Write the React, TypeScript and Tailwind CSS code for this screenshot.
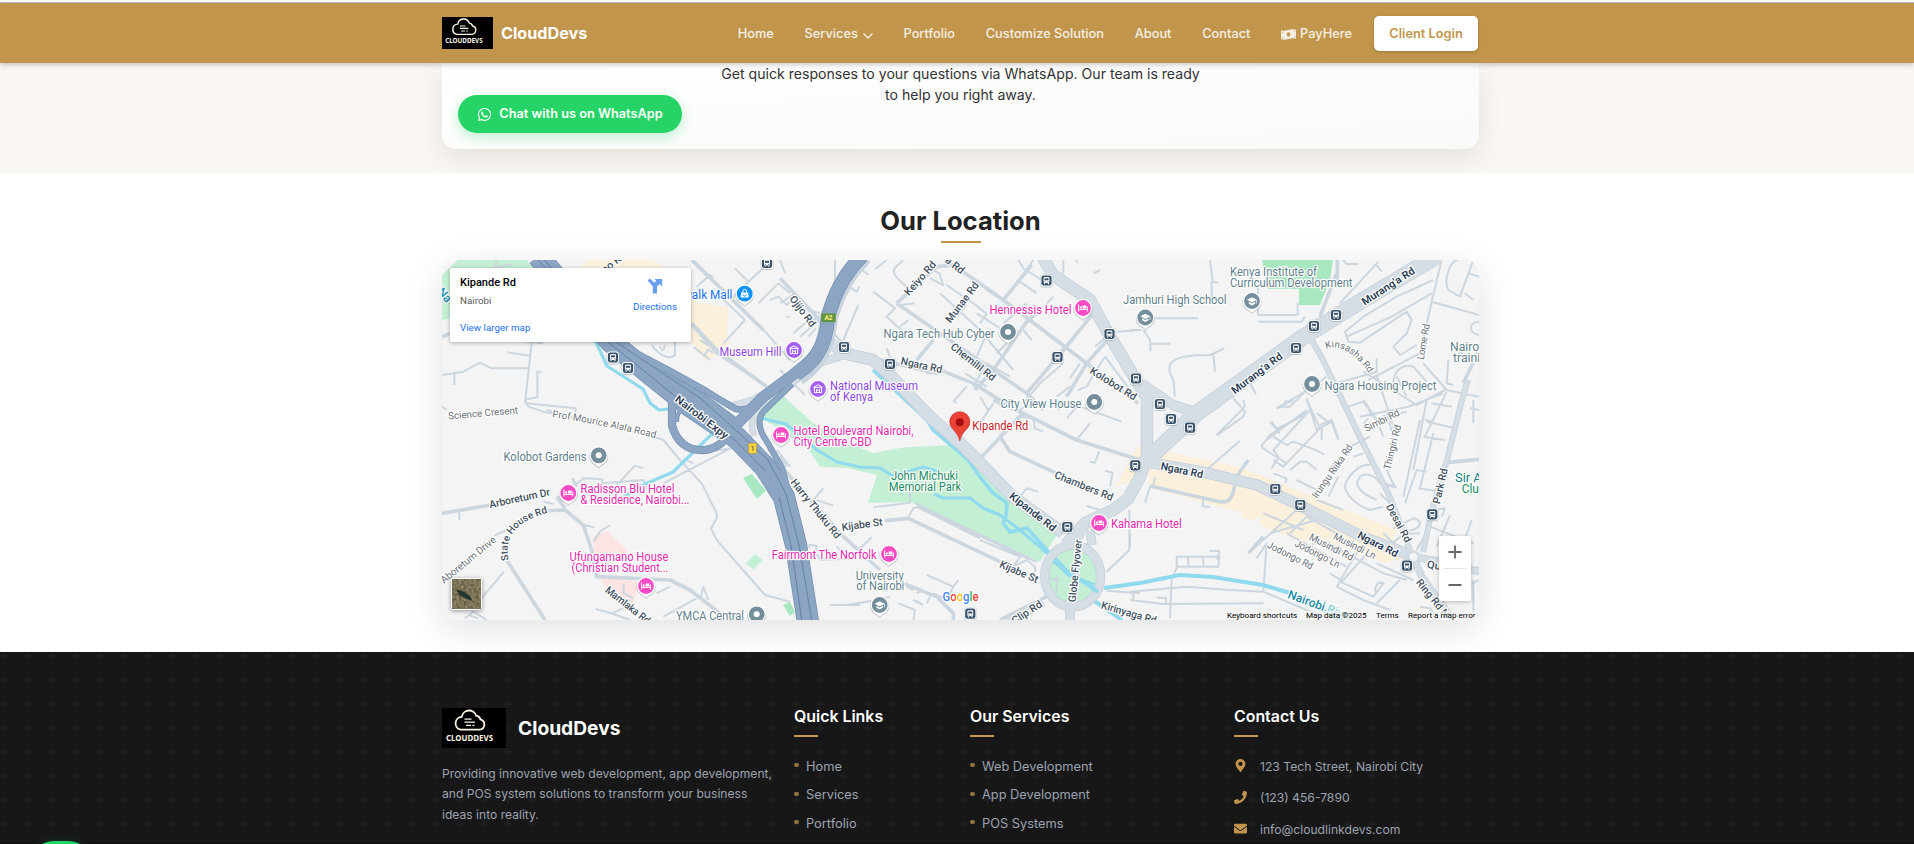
import React from "react";
import { FaWhatsapp, FaMoneyBillWave, FaMapMarkerAlt, FaPhone, FaEnvelope } from "react-icons/fa";

/* ---------- Logo ---------- */
function Logo({ className }: { className: string }) {
  return (
    <svg viewBox="0 0 64 40" preserveAspectRatio="none" className={className}>
      <rect width="64" height="40" fill="#000" />
      <path
        d="M18.5 21.7H37.5a5.3 5.3 0 0 0 .9-10.4 5 5 0 0 0-4.2-3.6 7.4 7.4 0 0 0-14.4 1.2A6.5 6.5 0 0 0 18.5 21.7z"
        fill="none"
        stroke="#fdf6e6"
        strokeWidth="1.8"
        strokeLinejoin="round"
      />
      <path d="M22.5 11.2h7M22.5 14.2h10.5M24 17.4h5M30.5 17.4h2" stroke="#fdf6e6" strokeWidth="1.3" />
      <text x="4" y="32.8" textLength="47" lengthAdjust="spacingAndGlyphs" fontFamily="'Noto Sans','Open Sans',sans-serif" fontWeight="700" fontSize="8" fill="#fdf6e6">
        CLOUDDEVS
      </text>
    </svg>
  );
}

/* ---------- Map data ---------- */
type Region = "nw" | "n" | "ne" | "sw" | "s" | "se";
const origin: Record<Region, string> = {
  nw: "translate(430 190) scale(.33333)",
  n: "translate(780 190) scale(.33333)",
  ne: "translate(1130 250) scale(.33333)",
  sw: "translate(430 400) scale(.33333)",
  s: "translate(780 400) scale(.33333)",
  se: "translate(1130 400) scale(.33333)",
};

const thinRoads: Record<Region, string> = {
  nw: "M36 555L100 545L150 518L185 535L300 535M73 545V585M232 487L300 497M305 457L285 640M285 455L340 460M325 545H335M333 545H322V622L290 628M285 640L440 655M200 210L195 235M180 238L245 222M790 210L1010 430L1080 510M915 235L955 275L1010 225M955 275L900 330M985 340L1045 280L1080 310M1020 330L1045 320L1070 345L1080 335M945 390L880 460M945 390L860 310M800 290L840 255L850 262M780 400L860 490L1010 590M665 465C690 500 720 510 735 495V455M690 470C700 490 700 480 705 465M810 450L850 475M790 470L840 510M820 500L835 478L850 490M1070 380H1080",
  n: "M0 265L120 400M0 210L15 250M165 210V300M190 280L230 305L238 290M210 240L240 210M240 235L265 255M285 238L320 210M0 340L45 310M40 430L75 400L115 385M60 440L95 410M85 440L108 415M90 360L120 370M160 430L200 470M235 345L190 450M280 305L345 355L320 380L380 435M360 345L405 340M380 290C320 240 340 240 370 210M360 410L385 390M450 265L490 285L478 250L440 230M500 285L580 340L620 372L600 400M480 310L600 420L700 540M560 485L600 520M530 380L560 345M590 370L700 440M620 430L590 500M690 560L620 520L580 590M650 490L690 450M740 400L760 370M730 420L755 450M715 210L730 235L785 270M690 310L760 210M720 275L770 310M850 210V250M890 220V210M940 250L960 240M670 400L740 340M800 340L820 320M1010 425L1080 420M975 500L1065 620M975 500L940 555L920 590L895 600M945 470L980 440M870 565L900 520M850 630L835 660M830 620L870 590M0 540L40 580L75 615M320 475L330 500M440 550H480L495 540M520 635L560 590M600 620L625 660M730 640L780 580L850 520M555 550L620 590M620 300L700 350",
  ne: "M240 30L248 95L265 98M245 95V165M75 205H205M0 240L35 240M40 240L60 270L62 303M60 281H122M283 295L240 315C140 315 110 330 120 370C140 400 130 430 135 440M250 310L255 365M360 400L378 433M310 445L345 485L340 500L260 556M384 105V195H500M384 215H515L525 200M503 160V195M630 160L745 35M640 30L650 42H685M740 45L755 65M935 30L905 155L870 310L715 390M905 155L1047 195M905 130L785 200L650 260M910 90L800 140L700 200L645 245L655 275L690 278L830 185L845 210L830 250L790 290L810 315L860 285M955 120C940 90 960 30 985 30M955 120L990 140L1030 30M1015 70L1047 80M1005 130L1030 150M1047 215C1020 215 1010 245 1047 255M880 340L950 420L1047 440M740 325V365L620 400M700 365L860 465L945 420M790 400C790 360 820 340 850 350L890 395M940 430L835 470L690 500M655 470L700 455L740 510M710 460L725 500M950 425L885 560M890 515L975 535M905 460L965 470M800 380L830 440M740 375L800 560M950 400L970 405M985 310H1000M955 330L950 400M440 475L550 410M460 470H480L520 430M570 395L590 380M530 445L560 540L605 515L625 570M420 515L450 550M410 570L530 480M575 535V570M770 490L790 560M560 490L600 520",
  sw: "M36 20L50 30M285 0L295 20L340 35L440 55L435 28M350 30L372 35M670 110L700 120L750 180L815 250L860 340V355L843 385L860 420L1005 585L1080 605M930 130L700 250M800 160L905 145M425 235L435 255L460 235L517 238V250L640 240L650 260M560 255L615 197L640 205M610 240L650 265M88 335V360M340 305L370 312M430 235L440 260M193 407L230 390M222 515L125 630M105 655L130 635L170 660M115 645L145 655M460 375L493 382M540 375L510 395L490 425M497 627L545 640L600 660M545 640L580 625M580 550L582 580L610 595M700 650L800 595M810 600L820 560L835 600M680 580L720 560M770 180L790 190M1040 150L1080 200",
  s: "M0 170L20 200M280 322L390 308V270M385 350L400 325L415 320L730 470L770 485M405 310L760 480M410 320L600 415M100 300L130 265M110 300L160 317M88 445V435L110 437L105 460L125 480L225 475M235 450L275 412M170 440L200 470M150 615H240M200 615L290 600L330 590M440 525L520 560L535 540M520 560L500 600L460 580M355 610L405 630L400 660M380 560L400 570M410 580L430 570M400 600L430 615M440 610L450 590M720 290L740 265L775 275M600 420L720 470L700 500M860 55L895 15M1025 65L900 20L850 5M890 120L930 70M720 50L760 55L765 85L790 95M730 40L720 30L760 0M930 185L945 188L957 155M975 212L998 218L990 260M920 318L960 330M980 515L1048 450V330M980 572L1080 580M700 500L740 480L765 500V515M800 530L840 545M830 530V580M600 70L640 10M520 0L530 10M740 90L710 50",
  se: "M340 0L345 20L260 105M0 575L170 560L300 570L400 575L600 660M0 600L100 612L400 610M80 592L108 595V612M10 575V600M120 655L125 535L140 505V470H268L265 500H140M175 470V500M220 475V500M238 453H268L262 480M400 575L410 430M355 460L500 330M410 430L380 475M235 205L330 122M0 440V400M60 260L45 308M75 230L70 255M220 300L218 318L240 322M500 240L560 270M430 220L470 235L465 250M425 205L445 170L430 150L540 30M430 180L460 200L570 85L530 0M393 140L420 105L530 35M393 140L430 165L470 190M430 110L470 135L490 125L545 145L583 163M425 65L440 85L465 75L520 45M480 210L510 185L530 185L560 210M570 75L605 60L625 115M440 25L490 0M455 25L470 0M645 265C645 230 690 190 720 195M645 265C660 300 690 320 720 330L760 320M680 250L690 230C710 215 740 230 750 250L795 262L770 210M680 250C690 280 720 290 740 300M560 300L640 330M595 290L625 230M640 150L720 110M670 170L700 160M700 0L740 60L830 35M740 60L760 110M715 55L700 70M780 310L750 280M760 250L800 262M825 310L860 210M820 290L870 60M865 265L935 275M870 265L910 100M885 60L910 65M880 110L945 120M860 210L890 215M890 0L850 210M910 330L945 325L935 350M900 380L1030 430M960 345L920 440M1025 360L1000 430M940 430L1000 460M790 385L850 355C880 360 880 390 820 395M760 400L790 430C810 400 850 400 870 400M400 340L520 390M480 400L530 350L620 400M420 400L560 360M470 400L650 500M560 420L540 440M630 450L760 520L830 540M690 440L620 560L700 600L780 630M600 520L640 545M630 545L730 590L760 550C740 540 730 570 740 580M810 540L740 610M720 450L640 540M740 490L850 540M960 440L990 470M860 450L900 380M1030 70V0M1020 25L1047 30M870 620L900 625L910 640L980 640M1030 660V540M1010 560L1047 540",
};

const midRoads: Record<Region, string> = {
  nw: "M36 440L62 430M785 400L860 480L1010 590M785 210L1000 420",
  n: "M350 340L560 485L740 610L790 660M350 340L470 230L520 225L670 330L920 520L1075 640M670 330L755 225M740 395L640 540L585 600M940 370L850 480L740 610M480 540L580 580L690 650M1000 430L920 520L860 620M460 450L410 510M780 360L740 395M260 500L470 550M0 265L120 390",
  ne: "M545 265L580 335L690 570M620 70L570 200M622 30V90M1047 300L1000 400",
  sw: "M36 340L200 312M355 332L405 330L460 375L485 450L500 530L720 540L780 570L870 640M230 480L345 660M380 290L405 325",
  s: "M0 195L180 400L300 510M315 362L385 355L660 485M370 550L470 590L520 640V660M660 110L690 155L830 220M660 110L730 40L640 0M605 170L730 40L890 120L1080 180M830 380L720 290M660 660L800 590",
  se: "M60 258L270 305C300 310 310 290 315 250M315 235L355 180M355 460L400 410M950 188L1047 178M1000 505H1047",
};

const trunk: { d: string; w: number }[] = [
  { d: "M822 338L847 354L873 360L892 377L930 417L960 443L980 463L1013 497L1063 533", w: 11 },
  { d: "M785 388L800 376L822 362L847 354", w: 7 },
  { d: "M728 406C752 404 770 392 795 374", w: 6 },
  { d: "M754 436C747 415 757 408 795 378", w: 5 },
  { d: "M1042 256L1053 275L1090 300L1108 333L1133 375L1147 398V437V455L1140 477L1128 499L1113 510L1085 523L1066 545", w: 11 },
  { d: "M1142 384L1173 405L1197 413", w: 9 },
  { d: "M1437 256L1363 300L1303 337L1197 413L1147 460", w: 15 },
  { d: "M1147 462L1203 472L1257 485L1303 507L1363 537L1410 555", w: 10 },
  { d: "M1423 552L1432 510L1447 460L1462 400L1468 380", w: 4.5 },
  { d: "M1310 337L1323 360L1360 437L1390 497L1410 550", w: 4.5 },
  { d: "M1413 557L1422 577L1450 616M1413 557L1445 562L1479 572", w: 6 },
  { d: "M1043 602L1008 622M1070 600V622", w: 8 },
  { d: "M1090 530L1092 545", w: 8 },
];

const express: { d: string; w: number }[] = [
  { d: "M538 256L611 342L650 374L690 406L737 438L765 467L784 497L796 545L808 622", w: 21 },
  { d: "M660 376L700 398L735 424", w: 11 },
  { d: "M618 338L630 350L670 371L706 391L722 401L736 409C746 411 752 407 758 402", w: 5.5 },
  { d: "M862 256C842 276 834 296 828 317C826 350 808 364 790 377L763 397L737 424", w: 10 },
  { d: "M862 256C842 276 834 296 828 317C826 350 812 364 796 374", w: 13 },
  { d: "M672 393V425C676 442 688 450 700 450C712 451 722 445 732 432", w: 7 },
  { d: "M677 422C676 414 680 410 688 404", w: 3 },
  { d: "M792 384L764 411C756 420 760 432 766 440L782 468L790 497", w: 5 },
];

type Label = [number, number, number, string, string];
const pink = "#e528ad";
const slate = "#5f7f8c";
const purple = "#8b46dd";
const green = "#1b8a5f";
const places: Label[] = [
  [989.5, 313.7, 82, "Hennessis Hotel", pink],
  [719.5, 355.7, 62, "Museum Hill", purple],
  [830, 389.5, 88, "National Museum", purple],
  [830, 400.5, 43, "of Kenya", purple],
  [883.5, 337.7, 111, "Ngara Tech Hub Cyber", slate],
  [1000.5, 407.5, 81, "City View House", slate],
  [1123, 304, 103.5, "Jamhuri High School", slate],
  [1230, 275.5, 87, "Kenya Institute of", slate],
  [1230, 286.5, 122.5, "Curriculum Development", slate],
  [1324.5, 389.5, 112, "Ngara Housing Project", slate],
  [1450, 351, 39, "Nairobi", slate],
  [1453, 362, 41, "training", slate],
  [503.5, 460.7, 83, "Kolobot Gardens", slate],
  [580.5, 492.7, 94, "Radisson Blu Hotel", pink],
  [580.5, 504, 109, "& Residence, Nairobi...", pink],
  [569.5, 561.3, 99, "Ufungamano House", pink],
  [571.5, 572.3, 97, "(Christian Student...", pink],
  [676, 619.5, 68, "YMCA Central", slate],
  [793.5, 434.7, 120, "Hotel Boulevard Nairobi,", pink],
  [793.5, 445.7, 78, "City Centre CBD", pink],
  [972.3, 430, 56, "Kipande Rd", "#c5221f"],
  [891, 480.3, 67, "John Michuki", green],
  [888.7, 491.3, 72.5, "Memorial Park", green],
  [771.7, 559.3, 105, "Fairmont The Norfolk", pink],
  [855.7, 579.7, 48, "University", slate],
  [856.3, 590.3, 48, "of Nairobi", slate],
  [1111, 528, 70.7, "Kahama Hotel", pink],
  [1455, 482, 33, "Sir Ali", "#158087"],
  [1461.7, 493, 24, "Club", green],
  [683, 299, 49.5, "walk Mall", "#1a73e8"],
];

// x, y, angle, width, text, tone
type Street = [number, number, number, number, string, "d" | "l" | "b"];
const streets: Street[] = [
  [803, 311, 53, 36, "Ojijo Rd", "d"],
  [920, 278, -48, 42, "Keiyo Rd", "d"],
  [962, 302, -53, 48, "Munae Rd", "d"],
  [955, 265, 38, 21, "a Rd", "d"],
  [611, 264, -38, 22, "no K", "d"],
  [921.7, 365, 12, 42, "Ngara Rd", "d"],
  [973.3, 361.7, 38, 54, "Chemilil Rd", "d"],
  [1113.5, 383.5, 32, 53, "Kolobot Rd", "d"],
  [1388, 286, -33, 61, "Murang'a Rd", "b"],
  [1256.7, 373, -37, 61, "Murang'a Rd", "b"],
  [1423, 341.7, -80, 36, "Lome Rd", "l"],
  [1381.7, 420, -27, 38, "Simbi Rd", "l"],
  [1392, 447, -76, 46, "Thingiri Rd", "l"],
  [1332, 471, -55, 63, "Irungu Riika Rd", "l"],
  [1182, 470, 12, 43, "Ngara Rd", "b"],
  [1378, 544, 27, 44, "Ngara Rd", "b"],
  [1440, 486, -77, 36, "Park Rd", "d"],
  [1399, 523, 62, 42, "Desai Rd", "d"],
  [1355, 545.5, 27, 46, "Musindi Ln", "l"],
  [1331.7, 546.7, 27, 48, "Musindi Rd", "l"],
  [1317.7, 553.5, 27, 49, "Jodongo Ln", "l"],
  [1290.5, 555, 27, 50, "Jodongo Rd", "l"],
  [1433, 598, 51, 46, "Ring Rd N", "d"],
  [1434, 565, 8, 14, "Qu", "d"],
  [1084, 485.7, 22, 62, "Chambers Rd", "d"],
  [1033, 511.7, 38, 56, "Kipande Rd", "b"],
  [862, 524.3, -8, 41, "Kijabe St", "d"],
  [1019, 571.5, 23, 41, "Kijabe St", "d"],
  [816, 508.5, 51, 73, "Harry Thuku Rd", "d"],
  [1075, 570.7, -84, 63, "Globe Flyover", "d"],
  [1026.7, 612, -33, 34, "Clip Rd", "d"],
  [1129, 612.5, 16, 57, "Kirinyaga Rd", "d"],
  [702, 417, 37.5, 64, "Nairobi Expy", "b"],
  [483, 412.7, -5, 70, "Science Cresent", "l"],
  [519.5, 498, -12, 62, "Arboretum Dr", "d"],
  [468, 559.5, -39, 68, "Aboretum Drive", "l"],
  [628, 605, 38, 54, "Mamlaka Rd", "d"],
];

const buses: [number, number][] = [
  [613, 357.5], [628, 368], [767, 263], [844, 347], [890, 364], [1046.5, 280.5], [1109.5, 334], [1057.5, 357],
  [1336, 315], [1314, 326], [1296, 348], [1136, 378.5], [1160, 404], [1171, 419], [1190, 427.7], [1135.3, 465.3],
  [1067.3, 527], [970.3, 613.7], [1275.3, 489], [1300.3, 505], [1432.3, 514.3], [1407, 565.7],
];

type PinKind = "bed" | "museum" | "dot" | "school" | "shop";
const pins: [number, number, PinKind][] = [
  [1083, 308, "bed"], [781, 435, "bed"], [568.3, 493, "bed"], [646, 586, "bed"], [889, 554, "bed"], [1099, 523, "bed"],
  [794, 350, "museum"], [818, 389, "museum"], [744.7, 293.7, "shop"],
  [1008, 332, "dot"], [1094.3, 402, "dot"], [1312, 384, "dot"], [598.7, 455.3, "dot"], [756.7, 614.3, "dot"],
  [1252, 301, "school"], [1145.3, 317.5, "school"], [879.7, 605, "school"],
];
const pinFill: Record<PinKind, string> = { bed: "#f94cc4", museum: "#a45df5", dot: "#748f9b", school: "#748f9b", shop: "#0a93fb" };

function Pin({ x, y, kind }: { x: number; y: number; kind: PinKind }) {
  return (
    <g transform={`translate(${x} ${y})`}>
      <path d="M0 12.4C-2 9.8-5 9.2-7.4 6.4A9.6 9.6 0 1 1 7.4 6.4C5 9.2 2 9.8 0 12.4z" fill="#8a949b" opacity=".5" transform="translate(0 .7)" />
      <path d="M0 11.7C-2 9.4-5 8.8-7 6A9.2 9.2 0 1 1 7 6C5 8.8 2 9.4 0 11.7z" fill="#fff" />
      <circle r="7.9" fill={pinFill[kind]} />
      {kind === "dot" && <circle r="3" fill="#fff" />}
      {kind === "bed" && (
        <path d="M-4.9-3.6h1V1H4V-1.6h.9V3.6H4V2H-3.9V3.6h-1zM-.4-2.4H3.4V.4H-.4zM-3.2-1.6h2v2h-2z" fill="#fff" />
      )}
      {kind === "school" && (
        <path d="M0-3.8L5-1.2L0 1.4L-5-1.2zM-3.2.8V2.8L0 4.4L3.2 2.8V.8L0 2.4zM4.4-1v3.6h.7V-1z" fill="#fff" />
      )}
      {kind === "museum" && (
        <path d="M-4.4-1.6L0-4.2L4.4-1.6zM-3.6-1.4V3.6H3.6V-1.4M-1.5 3.2V.3L0 1.6L1.5.3V3.2" stroke="#fff" strokeWidth="1" fill="none" />
      )}
      {kind === "shop" && (
        <>
          <path d="M-3.6-1.2H3.6L4 3.8H-4z" fill="#fff" />
          <path d="M-1.8-1V-2.6a1.8 1.8 0 0 1 3.6 0V-1" stroke="#fff" fill="none" />
          <path d="M-1.6.8a1.6 1.6 0 0 0 3.2 0" stroke="#0a93fb" strokeWidth=".9" fill="none" />
        </>
      )}
    </g>
  );
}

function Bus({ x, y }: { x: number; y: number }) {
  return (
    <g transform={`translate(${x} ${y})`}>
      <rect x="-6.4" y="-6.2" width="12.8" height="13.2" rx="3.4" fill="#9aa7b1" opacity=".6" />
      <rect x="-6" y="-6" width="12" height="12" rx="3" fill="#fff" />
      <rect x="-5.1" y="-5.1" width="10.2" height="10.2" rx="2.4" fill="#38536a" />
      <rect x="-2.9" y="-3.4" width="5.8" height="6" rx="1.1" fill="#fff" />
      <rect x="-2" y="-2.2" width="4" height="2" fill="#38536a" />
      <path d="M-2.4 2.6h1v1.2h-1zM1.4 2.6h1v1.2h-1z" fill="#fff" />
      <circle cx="-1.5" cy="1.3" r=".5" fill="#38536a" />
      <circle cx="1.5" cy="1.3" r=".5" fill="#38536a" />
    </g>
  );
}

const halo = { stroke: "#fff", strokeWidth: 2.4, strokeLinejoin: "round" as const, paintOrder: "stroke" };

function CityMap() {
  const regions = Object.keys(origin) as Region[];
  return (
    <svg viewBox="442 260 1037 360" width="1037" height="360" className="block" fontFamily="Roboto, sans-serif">
      <defs>
        <path id="alala" d="M552 417Q606 425 662 440" />
        <path id="statehouse" d="M509 560C502 535 520 518 556 511" />
        <path id="kinsasha" d="M1326 349Q1347 341 1370 375" />
      </defs>
      <rect x="442" y="260" width="1037" height="360" fill="#f4f4f5" />

      <g fill="#c3efd5">
        <path d="M442 275L460 258H525L560 300L442 320z" />
        <path d="M772 401L782 395L813 423L840 440L873 453L907 447L960 445L980 460L1020 500L1058 533L1047 550L1040 562L987 537L940 515L910 502L868 503L877 475L847 468L820 467L807 447L760 417z" />
        <path d="M746 563.5L755 554L763 560L753.5 569.5z" />
      </g>
      <path d="M743 478L752 474L766 491L757 499zM783 605L790 602L795 612L790 616zM1262 260H1333L1330 280L1320 305H1299V289H1268z" fill="#a7e8c0" />
      <path
        d="M580 268L590 258H647L670 270L697 303L713 305L728 307L727 333L730 343L707 362L683 330zM1133 455L1138 446L1160 450L1240 467L1290 487L1396 530L1393 541L1420 555L1385 563L1340 545L1300 541L1258 524L1262 518L1150 488L1147 468zM1243 503L1260 510L1254 521L1241 517zM1136 448V480L1115 487z"
        fill="#faf0dc"
      />
      <path d="M593 537L607 531L627 550L623 558L594 556zM597 576L640 582L633 603H622z" fill="#fce4e2" />
      <ellipse cx="1072.7" cy="576" rx="28" ry="31" fill="#c3efd5" />

      <g fill="none" strokeLinejoin="round" stroke="#ccd6df">
        {regions.map((r) => (
          <path key={r} d={thinRoads[r]} transform={origin[r]} strokeWidth="6" />
        ))}
        {regions.map((r) => (
          <path key={r} d={midRoads[r]} transform={origin[r]} strokeWidth="11" />
        ))}
      </g>

      <g fill="none" stroke="#90daee" strokeWidth="3.2" strokeLinejoin="round">
        <path d="M595 340L607 366L643 389L650 403L659 410L680 408M716 430L673 472L643 485L622 498" />
        <path d="M760 418L786 424L817 450L837 462L860 467L880 468L893 476L923 467L940 472M934 494L943 498L970 498L983 508L1000 515L1020 530L1047 553L1068 575L1095 585" />
        <path d="M873 370L913 407L927 420L933 430L953 447L968 460L980 477L993 493L1007 503L1006 516L1003 523L1010 532L1027 528L1047 550L1068 572" strokeWidth="3.6" />
        <path d="M1104 588L1140 583L1180 575L1213 577L1263 585L1290 593L1345 622M1093 600L1122 620" strokeWidth="4" />
      </g>

      <g fill="none" strokeLinejoin="round">
        {trunk.map((t, i) => (
          <path key={i} d={t.d} stroke="#c3ced8" strokeWidth={t.w + 1.4} />
        ))}
        <ellipse cx="1072.7" cy="576" rx="28" ry="31" stroke="#c3ced8" strokeWidth="9.4" />
        {trunk.map((t, i) => (
          <path key={i} d={t.d} stroke="#d5dde5" strokeWidth={t.w} />
        ))}
        <ellipse cx="1072.7" cy="576" rx="28" ry="31" stroke="#d5dde5" strokeWidth="8" />
        <path d="M1069 622L1075 600L1080 540L1084 530" stroke="#d5dde5" strokeWidth="5" />
        <path d="M1053 561L1098 592" stroke="#90daee" strokeWidth="3.6" />
        <circle cx="1413.5" cy="557" r="5.4" fill="#f4f4f5" stroke="#d0d9e1" strokeWidth="2.5" />
      </g>

      <g fill="none" strokeLinejoin="round">
        <path d="M864 256C844 276 836 296 829 317C826 352 814 366 798 377" stroke="#c8d3dd" strokeWidth="18" />
        {express.map((t, i) => (
          <path key={i} d={t.d} stroke="#6f8cb0" strokeWidth={t.w + 1.2} />
        ))}
        {express.map((t, i) => (
          <path key={i} d={t.d} stroke="#8ba5c2" strokeWidth={t.w} />
        ))}
        <g stroke="#5b779f" strokeWidth=".8">
          <path d="M535 256L608 342L648 374L688 407L735 440L765 471" />
          <path d="M541 256L613 340L655 368L700 398L738 432L768 460L786 494L799 545L812 622" />
          <path d="M779 497L791 545L802 622" />
        </g>
      </g>

      <rect x="821.3" y="313.3" width="14.4" height="8.8" fill="#5f9440" />
      <text x="828.5" y="320" fontSize="6.6" fontWeight="700" fill="#fff27a" textAnchor="middle">A2</text>
      <rect x="748.8" y="443.3" width="7.6" height="10" fill="#fad83f" stroke="#c79f2a" strokeWidth=".7" />
      <text x="752.5" y="451" fontSize="7.5" fill="#333" textAnchor="middle">1</text>

      <g {...halo}>
        {streets.map(([x, y, a, w, t, tone], i) => (
          <text
            key={i}
            transform={`translate(${x} ${y}) rotate(${a})`}
            y="3.8"
            x={-w / 2}
            textLength={w}
            lengthAdjust="spacingAndGlyphs"
            fontSize={tone === "l" ? 10 : 10.5}
            fontWeight={tone === "b" ? 600 : tone === "d" ? 500 : 400}
            fill={tone === "l" ? "#686f76" : tone === "b" ? "#2c3e55" : "#42525f"}
          >
            {t}
          </text>
        ))}
        <text fontSize="9.8" fill="#686f76"><textPath href="#alala">Prof Mourice Alala Road</textPath></text>
        <text fontSize="10" fontWeight="500" fill="#42525f"><textPath href="#statehouse">State House Rd</textPath></text>
        <text fontSize="9.6" fill="#686f76"><textPath href="#kinsasha">Kinsasha Rd</textPath></text>
        <text transform="translate(1288 595) rotate(20)" y="3" fontSize="12" fontWeight="500" fill="#178ba3">
          Nairobi <tspan fill="#8fd0dc">River</tspan>
        </text>
        <text transform="translate(439 290) rotate(50)" y="3" fontSize="12" fontWeight="500" fill="#178ba3">Na</text>
      </g>

      {buses.map(([x, y], i) => (
        <Bus key={i} x={x} y={y} />
      ))}
      {pins.map(([x, y, k], i) => (
        <Pin key={i} x={x} y={y} kind={k} />
      ))}
      <path d="M959.8 441C958.5 435 955.5 432 952.3 428.5A10.1 10.1 0 1 1 967.3 428.5C964 432 961 435 959.8 441z" fill="#ea4335" stroke="#c5221f" strokeWidth=".6" />
      <circle cx="959.8" cy="422.3" r="4" fill="#a50e0e" />

      <g {...halo}>
        {places.map(([x, y, w, t, c], i) => (
          <text key={i} x={x} y={y} textLength={w} lengthAdjust="spacingAndGlyphs" fontSize="12" fill={c}>
            {t}
          </text>
        ))}
        <text x="942.5" y="601.3" fontSize="12.5" fontWeight="500" textLength="36" lengthAdjust="spacingAndGlyphs">
          <tspan fill="#4285f4">G</tspan>
          <tspan fill="#ea4335">o</tspan>
          <tspan fill="#fbbc05">o</tspan>
          <tspan fill="#4285f4">g</tspan>
          <tspan fill="#34a853">l</tspan>
          <tspan fill="#ea4335">e</tspan>
        </text>
      </g>
    </svg>
  );
}

function MapPanel() {
  return (
    <div className="relative h-[360px] w-[1037px] overflow-hidden rounded-[14px]">
      <CityMap />
      <div className="absolute left-2 top-2 flex h-[74px] w-[241px] justify-between rounded-[2px] bg-white pl-[10px] pr-[14px] font-[Roboto,sans-serif] shadow-[0_1px_4px_rgba(0,0,0,0.3)]">
        <div className="flex flex-col whitespace-nowrap pt-[8px]">
          <div className="text-[11px] font-medium leading-[14px] text-black">Kipande Rd</div>
          <div className="mt-[4px] text-[9.8px] leading-[13px] text-[#5b5b5b]">Nairobi</div>
          <div className="mt-[14px] text-[9.8px] leading-[13px] text-[#1a73e8]">View larger map</div>
        </div>
        <div className="flex flex-col items-center pt-[10px]">
          <svg viewBox="0 0 16 16" className="h-4 w-4">
            <path d="M.6 2.6L2.8.5L7.2 4.6L9.4 3.2L7.6 1H15.2V8.4L12.8 6L10 8.6V15.5H5.8V8.2z" fill="#6ba0ee" />
          </svg>
          <div className="mt-[6px] text-[9.8px] leading-[13px] text-[#1a73e8]">Directions</div>
        </div>
      </div>
      <div className="absolute bottom-[10.5px] left-[8.5px] h-[31.5px] w-[31.5px] rounded-[2px] border border-white bg-[#5d594a] shadow-[0_1px_4px_rgba(0,0,0,0.4)]">
        <svg viewBox="0 0 30 30" className="h-full w-full">
          <defs>
            <filter id="terrain">
              <feTurbulence type="fractalNoise" baseFrequency=".4" numOctaves="3" seed="4" />
              <feColorMatrix colorInterpolationFilters="sRGB" values=".6 0 0 0 .05 .55 0 0 0 .05 .4 0 0 0 .05 0 0 0 0 1" />
            </filter>
          </defs>
          <rect width="30" height="30" filter="url(#terrain)" />
          <path d="M4 10L12 13L18 17L21 22L14 20L7 16z" fill="#23372d" />
        </svg>
      </div>
      <div className="absolute bottom-[19px] right-2 flex h-[65px] w-8 flex-col items-center rounded-[2px] bg-white shadow-[0_1px_4px_rgba(0,0,0,0.25)]">
        <svg viewBox="0 0 14 14" className="my-[9px] h-[14px] w-[14px]" stroke="#666" strokeWidth="1.8">
          <path d="M7 .5v13M.5 7h13" />
        </svg>
        <div className="h-px w-6 bg-[#e6e6e6]" />
        <svg viewBox="0 0 14 14" className="my-[9px] h-[14px] w-[14px]" stroke="#666" strokeWidth="1.8">
          <path d="M.5 7h13" />
        </svg>
      </div>
      <div className="absolute bottom-0 right-0 flex h-[9px] items-center gap-[10px] whitespace-nowrap bg-[#f5f5f5]/70 pl-1 pr-[5px] font-[Roboto,sans-serif] text-[8.1px] leading-[9px] text-black">
        <span className="w-[69px]">Keyboard shortcuts</span>
        <span className="w-[60px]">Map data ©2025</span>
        <span className="w-[22px]">Terms</span>
        <span className="w-[66px]">Report a map error</span>
      </div>
    </div>
  );
}

/* ---------- Footer ---------- */
function FooterPattern() {
  return (
    <svg className="absolute inset-0 h-full w-full">
      <defs>
        <pattern id="plus" width="24" height="24" patternUnits="userSpaceOnUse">
          <path d="M3 0h2v3h3v2H5v3H3V5H0V3h3z" fill="#1e1e1e" />
        </pattern>
      </defs>
      <rect width="100%" height="100%" fill="url(#plus)" />
    </svg>
  );
}

function FooterHeading({ children }: { children: React.ReactNode }) {
  return (
    <div className="-mt-px">
      <h3 className="text-[15.9px] font-semibold leading-[20px] text-white">{children}</h3>
      <div className="mt-2 h-[2px] w-6 bg-[#c1954b]" />
    </div>
  );
}

function LinkColumn({ title, items }: { title: string; items: string[] }) {
  return (
    <div>
      <FooterHeading>{title}</FooterHeading>
      <ul className="mt-[15px] flex flex-col">
        {items.map((t) => (
          <li key={t} className="flex h-[28.6px] items-center gap-[7px] text-[12.8px] text-[#9ca3af]">
            <span className="mb-[2px] h-1 w-[5px] rounded-full bg-[#94733c]" />
            {t}
          </li>
        ))}
      </ul>
    </div>
  );
}

export default function App() {
  return (
    <div className="relative h-[844px] w-full overflow-hidden bg-white font-[Inter,sans-serif] text-[#222]">
      <div className="h-[2px] bg-white" />
      <div className="h-px bg-[#b9c0c9]" />
      <header className="relative z-10 flex h-[60px] justify-center bg-[#c1954b] pl-[7px] shadow-[0_2px_5px_rgba(0,0,0,0.2)]">
        <div className="flex w-[1037px] items-center justify-between">
          <div className="flex items-center gap-2">
            <Logo className="h-8 w-[51px]" />
            <span className="text-[16.2px] font-bold text-white">CloudDevs</span>
          </div>
          <nav className="flex items-center pt-px text-[12.8px] font-medium text-white/85">
            <div className="flex items-center gap-[30.7px] pt-px">
              <span>Home</span>
              <span className="flex items-center gap-[5px]">
                Services
                <svg viewBox="0 0 10 10" className="mt-[3px] h-[10px] w-[10px]" fill="none" stroke="currentColor" strokeWidth="1.4" strokeLinecap="round" strokeLinejoin="round">
                  <path d="M1 3l4 4 4-4" />
                </svg>
              </span>
              <span>Portfolio</span>
              <span>Customize Solution</span>
              <span>About</span>
              <span>Contact</span>
              <span className="flex items-center gap-[4px]">
                <FaMoneyBillWave className="h-[15px] w-[15px]" />
                PayHere
              </span>
            </div>
            <span className="ml-[22px] mr-px flex h-[35px] w-[104px] items-center justify-center rounded-[5px] bg-white font-semibold text-[#c1954b] shadow-[0_1px_3px_rgba(0,0,0,0.2)]">
              Client Login
            </span>
          </nav>
        </div>
      </header>

      <section className="flex h-[110px] justify-center overflow-hidden bg-[#faf6f1] pl-[7px]">
        <div className="relative h-[86px] w-[1037px] rounded-b-[14px] bg-linear-to-br from-white to-[#f9f9f9] shadow-[0_9px_27px_rgba(0,0,0,0.09)]">
          <p className="mx-auto w-[500px] text-center text-[14.1px] leading-[21px] text-[#333]">
            Get quick responses to your questions via WhatsApp. Our team is ready
            <br />
            to help you right away.
          </p>
          <div className="absolute left-4 top-8 flex h-[38px] w-[224px] items-center justify-center gap-[7px] rounded-full bg-[#25d366] text-[12.75px] font-semibold text-white shadow-[0_4px_13px_rgba(37,211,102,0.3)]">
            <FaWhatsapp className="h-[15px] w-[15px]" />
            Chat with us on WhatsApp
          </div>
        </div>
      </section>

      <section className="flex h-[479px] flex-col items-center overflow-hidden bg-white pl-[7px]">
        <h2 className="mt-[33px] text-[25.6px] font-bold leading-[30px] text-[#222]">Our Location</h2>
        <div className="mb-[17px] mt-[5px] h-[2px] w-10 shrink-0 bg-[#c1954b]" />
        <div className="shrink-0 rounded-[14px] shadow-[0_9px_36px_rgba(0,0,0,0.12)]">
          <MapPanel />
        </div>
      </section>

      <footer className="relative h-[190px] bg-[#171717] pl-[7px]">
        <FooterPattern />
        <div className="relative mx-auto flex w-[1037px] pt-14">
          <div className="w-[352px]">
            <div className="flex items-center gap-3">
              <Logo className="h-10 w-16" />
              <span className="text-[19.2px] font-bold text-white">CloudDevs</span>
            </div>
            <p className="mt-4 w-[345px] text-[12.1px] leading-[20.4px] text-[#9ca3af]">
              Providing innovative web development, app development,
              <br />
              and POS system solutions to transform your business
              <br />
              ideas into reality.
            </p>
          </div>
          <div className="w-[176px]">
            <LinkColumn title="Quick Links" items={["Home", "Services", "Portfolio"]} />
          </div>
          <div className="w-[264px]">
            <LinkColumn title="Our Services" items={["Web Development", "App Development", "POS Systems"]} />
          </div>
          <div>
            <FooterHeading>Contact Us</FooterHeading>
            <ul className="mt-[14px] flex flex-col text-[12.15px] text-[#9ca3af]">
              {[
                { icon: <FaMapMarkerAlt />, t: "123 Tech Street, Nairobi City" },
                { icon: <FaPhone />, t: "(123) 456-7890" },
                { icon: <FaEnvelope />, t: "info@cloudlinkdevs.com" },
              ].map((c) => (
                <li key={c.t} className="flex h-[31.6px] items-center">
                  <span className="mb-[2px] flex w-[26px] text-[13px] text-[#c1954b]">{c.icon}</span>
                  {c.t}
                </li>
              ))}
            </ul>
          </div>
        </div>
      </footer>
      <div className="h-[2px] bg-[#111]" />
      <div className="absolute left-[30px] top-[841px] h-12 w-[62px] rounded-[24px] bg-[#25d366] shadow-[0_4px_13px_rgba(37,211,102,0.3)]" />
    </div>
  );
}
